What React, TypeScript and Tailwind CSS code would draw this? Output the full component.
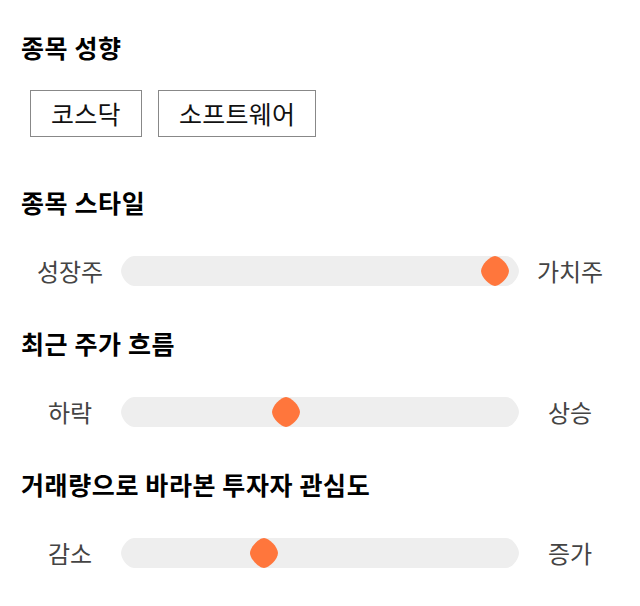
import * as React from 'react'

const font = { fontFamily: '"Noto Sans CJK KR", "Noto Sans", sans-serif' }

function Heading({ children }: { children: React.ReactNode }) {
  return <h2 className="text-[25px] leading-[30px] font-bold tracking-[0.6px] text-black">{children}</h2>
}

function Track() {
  return (
    <svg width="398" height="30" viewBox="0 0 398 30" className="block">
      <path d="M13 0 H385 C392 0 398 10 398 15 C398 20 392 30 385 30 H13 C6 30 0 20 0 15 C0 10 6 0 13 0 Z" fill="#eeeeee" />
    </svg>
  )
}

function Thumb() {
  return (
    <svg width="28" height="30" viewBox="0 0 28 30" className="block">
      <path d="M14 0 C19 0 28 9 28 15 C28 21 19 30 14 30 C9 30 0 21 0 15 C0 9 9 0 14 0 Z" fill="#ff763c" />
    </svg>
  )
}

function SliderRow({ left, right, pos }: { left: string; right: string; pos: number }) {
  return (
    <div className="flex items-center h-[30px]">
      <div className="w-[98px] text-center text-[24px] leading-[30px] text-[#444]">{left}</div>
      <div className="relative ml-[2px] w-[398px] h-[30px]">
        <Track />
        <div className="absolute top-0" style={{ left: pos - 14 }}>
          <Thumb />
        </div>
      </div>
      <div className="w-[102px] text-center text-[24px] leading-[30px] text-[#444]">{right}</div>
    </div>
  )
}

export default function App() {
  return (
    <div className="bg-white w-[640px] h-[606px] pl-[21px] pt-[32px]" style={font}>
      <Heading>종목 성향</Heading>
      <div className="flex gap-4 mt-[28px] ml-[9px]">
        {['코스닥', '소프트웨어'].map((t) => (
          <div key={t} className="h-[47px] px-[20px] border border-[#888] flex items-center text-[25px] tracking-[0.3px] text-[#111]">
            {t}
          </div>
        ))}
      </div>

      <div className="mt-[50px]">
        <Heading>종목 스타일</Heading>
      </div>
      <div className="mt-[39px]">
        <SliderRow left="성장주" right="가치주" pos={374} />
      </div>

      <div className="mt-[42px]">
        <Heading>최근 주가 흐름</Heading>
      </div>
      <div className="mt-[39px]">
        <SliderRow left="하락" right="상승" pos={165} />
      </div>

      <div className="mt-[42px]">
        <Heading>거래량으로 바라본 투자자 관심도</Heading>
      </div>
      <div className="mt-[39px]">
        <SliderRow left="감소" right="증가" pos={143} />
      </div>
    </div>
  )
}
